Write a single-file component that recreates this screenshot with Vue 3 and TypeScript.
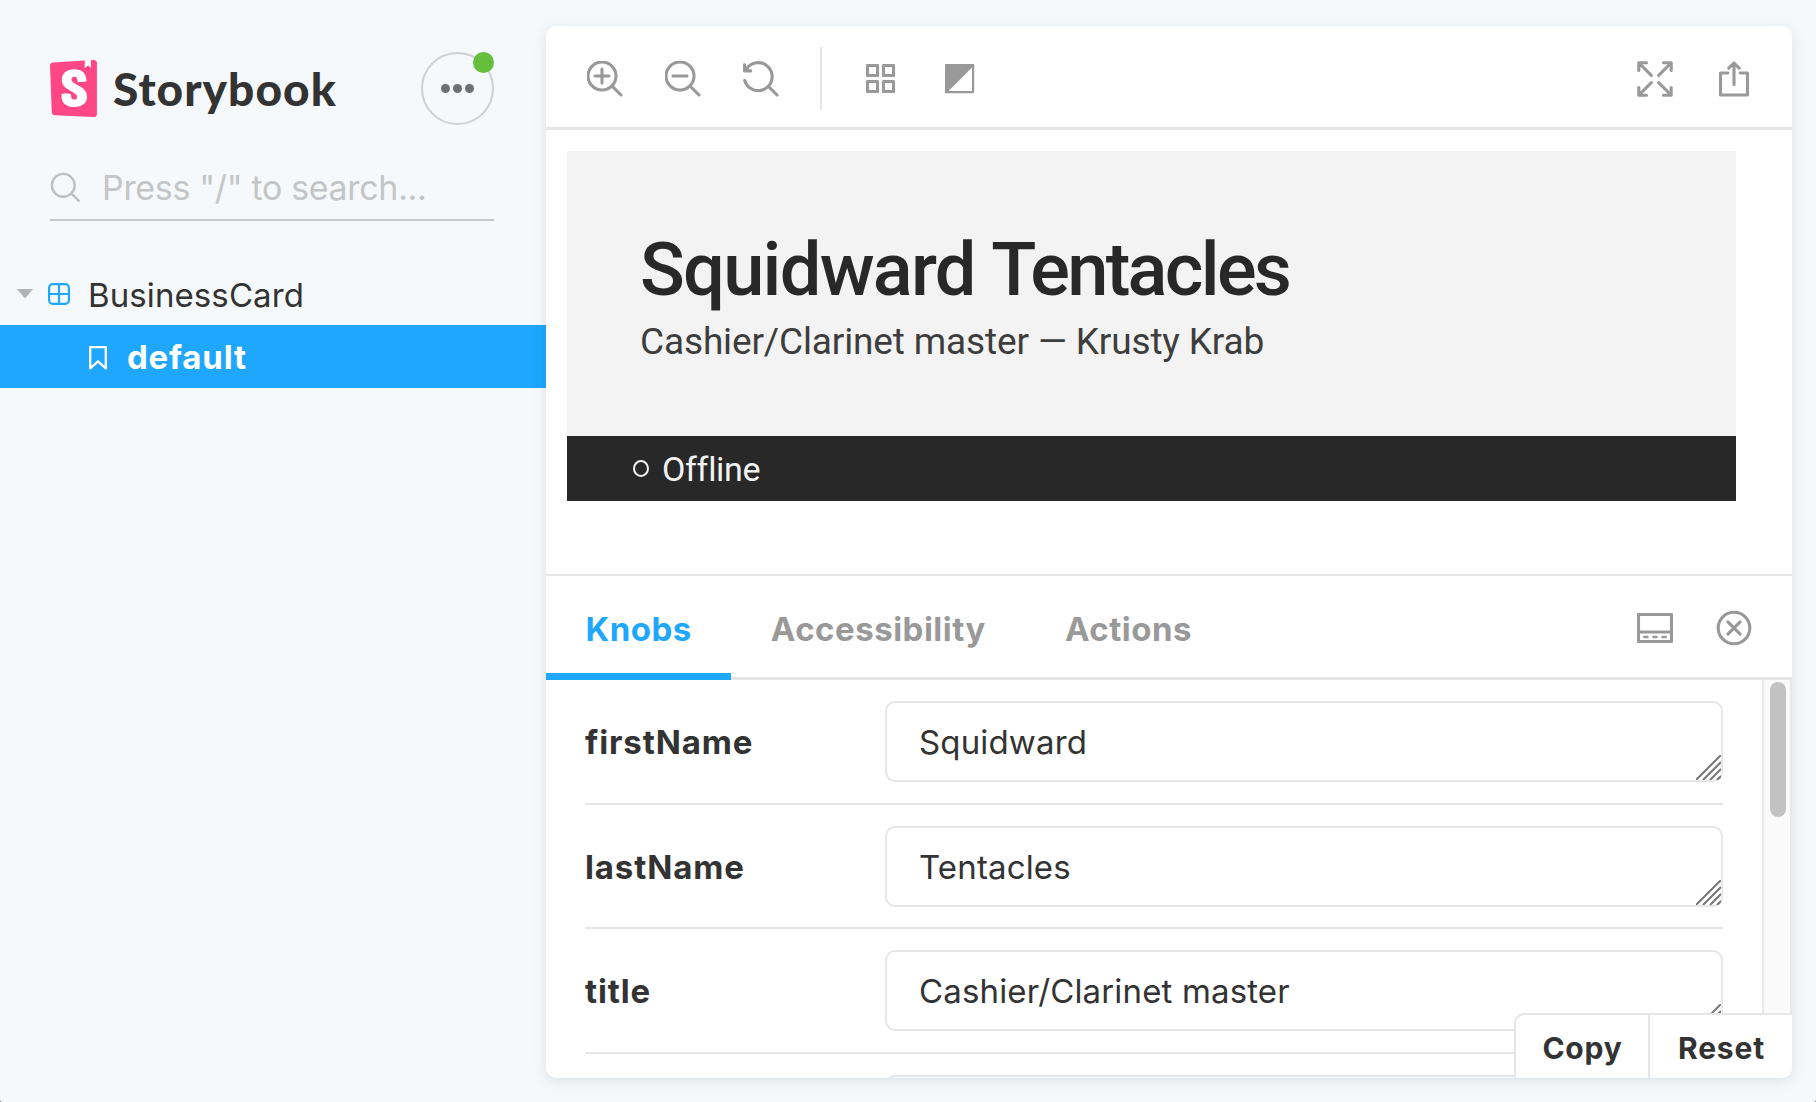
<script setup lang="ts">
import { ref } from 'vue'

interface Knob {
  name: string
  value: string
}

const tabs = ['Knobs', 'Accessibility', 'Actions']
const activeTab = ref('Knobs')

const knobs: Knob[] = [
  { name: 'firstName', value: 'Squidward' },
  { name: 'lastName', value: 'Tentacles' },
  { name: 'title', value: 'Cashier/Clarinet master' },
  { name: '', value: '' },
]
</script>

<template>
  <div class="app">
    <aside class="sidebar">
      <header class="brand">
        <svg class="logo" viewBox="0 0 256 319" preserveAspectRatio="none">
          <path fill="#ff4785" d="M9.87 293.32L.01 30.57C-.31 21.9 6.34 14.54 15.01 14L238.5.03c8.82-.55 16.42 6.15 16.97 14.97.02.33.03.66.03 1v286.93c0 8.84-7.16 16-16 16-.24 0-.48-.01-.72-.02L25.14 309.08c-8.28-.37-14.91-7.03-15.27-15.76z" />
          <path fill="#fff" d="M188.67 39.13l1.59-38.15L222.16 0l1.37 39.2c-.05 1.37-1.2 2.44-2.57 2.39-.54-.02-1.06-.21-1.48-.54l-12.3-9.69-14.57 11.05c-1.09.83-2.64.61-3.47-.47-.33-.43-.5-.97-.47-1.52zm-39.25 80.85c0 6.47 43.58 3.37 49.43-1.17 0-44.05-23.64-67.2-66.93-67.2-43.28 0-67.54 23.51-67.54 58.78 0 61.42 82.89 62.6 82.89 96.1 0 9.41-4.6 15-14.73 15-13.2 0-18.41-6.74-17.8-29.66 0-4.97-50.35-6.52-51.89 0-3.91 55.55 30.7 71.58 70.31 71.58 38.38 0 68.46-20.46 68.46-57.49 0-65.84-84.13-64.07-84.13-96.69 0-13.22 9.82-14.99 15.65-14.99 6.14 0 17.19 1.08 16.28 25.73z" />
        </svg>
        <span class="wordmark">Storybook</span>
        <button class="menu" aria-label="Menu">
          <i></i><i></i><i></i>
          <b class="badge"></b>
        </button>
      </header>

      <label class="search">
        <svg width="32" height="32" viewBox="0 0 32 32" fill="none" stroke="#bfc0c2" stroke-width="2.4" stroke-linecap="round">
          <circle cx="13.3" cy="13.3" r="11.4" />
          <path d="M21.6 21.6l7.2 7.2" />
        </svg>
        <span class="placeholder">Press "/" to search...</span>
      </label>

      <nav class="tree">
        <div class="node">
          <svg class="caret" width="16" height="10" viewBox="0 0 16 10"><path fill="#b2b3b5" d="M0 0h16L8 9.4z" /></svg>
          <svg class="component" width="22" height="22" viewBox="0 0 22 22" fill="none" stroke="#1ea7fd" stroke-width="2.2">
            <rect x="1.1" y="1.1" width="19.8" height="19.8" rx="3.6" />
            <path d="M11 1v20M1 11h20" />
          </svg>
          <span class="node-label">BusinessCard</span>
        </div>
        <div class="node selected">
          <svg class="bookmark" width="18" height="24" viewBox="0 0 18 24" fill="none" stroke="#fff" stroke-width="2.3" stroke-linejoin="round">
            <path d="M1.2 1.2h15.6v21.2l-7.8-7-7.8 7z" />
          </svg>
          <span class="story-label">default</span>
        </div>
      </nav>
    </aside>

    <main class="frame">
      <div class="toolbar">
        <svg class="tool" width="36" height="36" viewBox="0 0 36 36">
          <circle cx="15" cy="15" r="14" /><path d="M25.5 25.5L34 34M15 8v14M8 15h14" />
        </svg>
        <svg class="tool" width="36" height="36" viewBox="0 0 36 36">
          <circle cx="15" cy="15" r="14" /><path d="M25.5 25.5L34 34M8 15h14" />
        </svg>
        <svg class="tool" width="36" height="36" viewBox="0 0 36 36">
          <path d="M1.7 19.5A14 14 0 1 0 3.2 8.3M25.5 25.5L34 34M1.5 3.7v6.2h6.2M1.5 9.9L5 6.2" />
        </svg>
        <span class="separator"></span>
        <svg class="tool grid" width="30" height="30" viewBox="0 0 30 30">
          <rect x="1.5" y="1.5" width="10" height="10" /><rect x="17.5" y="1.5" width="10" height="10" />
          <rect x="1.5" y="17.5" width="10" height="10" /><rect x="17.5" y="17.5" width="10" height="10" />
        </svg>
        <svg class="tool contrast" width="30" height="30" viewBox="0 0 30 30">
          <rect class="thin" x="1.1" y="1.1" width="27" height="27" /><path class="solid" d="M1 1h27L1 28z" />
        </svg>
        <span class="grow"></span>
        <svg class="tool" width="36" height="36" viewBox="0 0 36 36">
          <path d="M1.8 9.5V1.8h7.7M2 2l12.3 12.3M26.5 1.8h7.7v7.7M34 2L21.7 14.3M1.8 26.5v7.7h7.7M2 34l12.3-12.3M26.5 34.2h7.7v-7.7M34 34L21.7 21.7" />
        </svg>
        <svg class="tool share" width="32" height="36" viewBox="0 0 32 36">
          <path d="M9.8 12H2.5v22h27V12h-7.3M16 23.5V2M10.8 7.2L16 2l5.2 5.2" />
        </svg>
      </div>

      <section class="preview">
        <article class="card">
          <div class="card-body">
            <h1>Squidward <span class="last">Tentacles</span></h1>
            <p>Cashier/Clarinet master — Krusty Krab</p>
          </div>
          <footer class="card-foot"><i class="ring"></i><span class="status">Offline</span></footer>
        </article>
      </section>

      <section class="addons">
        <div class="tabs">
          <button
            v-for="tab in tabs"
            :key="tab"
            class="tab"
            :class="{ active: tab === activeTab }"
            @click="activeTab = tab"
          >{{ tab }}</button>
          <span class="grow"></span>
          <svg class="tool panel-icon" width="36" height="30" viewBox="0 0 36 30">
            <rect x="1.5" y="1.5" width="33" height="27" /><path d="M2 19h32" />
            <path class="dash" d="M7.3 24h3.2M16.4 24h3.2M25.5 24h3.2" />
          </svg>
          <svg class="tool close" width="36" height="36" viewBox="0 0 36 36">
            <circle cx="18" cy="18" r="15.8" /><path d="M11.9 11.9l12.2 12.2M24.1 11.9L11.9 24.1" />
          </svg>
        </div>
        <div class="panel-body">
          <div class="knobs">
            <div v-for="(knob, i) in knobs" :key="i" class="knob">
              <span class="knob-name">{{ knob.name }}</span>
              <div class="field">
                <span class="value">{{ knob.value }}</span>
                <svg class="resize" width="25" height="25" viewBox="0 0 25 25" fill="none" stroke="#777" stroke-width="2">
                  <path d="M0 25L25 0M7 25L25 7M14 25L25 14M21 25L25 21" />
                </svg>
              </div>
            </div>
          </div>
          <div class="scrollbar"><div class="thumb"></div></div>
        </div>
        <div class="footer-actions">
          <button class="copy">Copy</button>
          <button class="reset">Reset</button>
        </div>
      </section>
    </main>
  </div>
</template>

<style>
html {
  background: #8d9092;
}
body {
  overflow: hidden;
}
</style>

<style scoped>
* {
  box-sizing: border-box;
}
.app {
  display: flex;
  width: 1816px;
  height: 1102px;
  overflow: hidden;
  background: #f6f9fc;
  border-radius: 0 0 3px 3px;
  color: #333;
  font-family: Inter, "Liberation Sans", sans-serif;
  font-size: 33px;
}
button {
  margin: 0;
  padding: 0;
  border: 0;
  background: none;
  color: inherit;
  font: inherit;
}
svg {
  display: block;
  flex: none;
}
.sidebar {
  flex: none;
  width: 546px;
}
.brand {
  display: flex;
  align-items: center;
  height: 73px;
  margin: 52px 52px 0 50px;
}
.logo {
  width: 47px;
  height: 57px;
}
.wordmark {
  margin-left: 16px;
  font: 900 46px/73px Lato, sans-serif;
  letter-spacing: 1.05px;
  white-space: nowrap;
}
.menu {
  position: relative;
  display: flex;
  align-items: center;
  justify-content: center;
  gap: 3px;
  width: 73px;
  height: 73px;
  margin-left: auto;
  border: 2px solid #ced0d3;
  border-radius: 50%;
}
.menu i {
  width: 9px;
  height: 9px;
  border-radius: 50%;
  background: #6d6f71;
}
.badge {
  position: absolute;
  top: -2px;
  right: -2px;
  width: 21px;
  height: 21px;
  border-radius: 50%;
  background: #66bf3c;
}
.search {
  display: flex;
  align-items: center;
  width: 444px;
  height: 65px;
  margin: 31px 0 0 50px;
  border-bottom: 2px solid #c5c7ca;
}
.placeholder {
  margin: 0 0 0 20px;
  color: #c4c5c7;
  font-size: 34px;
  letter-spacing: -0.33px;
  white-space: nowrap;
}
.tree {
  margin-top: 41px;
}
.node {
  display: flex;
  align-items: center;
  height: 63px;
  padding-left: 17px;
  white-space: nowrap;
}
.component {
  margin-left: 15px;
}
.node-label {
  margin: 3px 0 0 18px;
  letter-spacing: 0.1px;
}
.selected {
  padding-left: 89px;
  background: #1ea7fd;
  color: #fff;
  font-weight: 700;
}
.story-label {
  margin-left: 20px;
  letter-spacing: 0.8px;
}
.bookmark {
  margin-top: 3px;
}
.frame {
  display: flex;
  flex-direction: column;
  position: relative;
  width: 1246px;
  height: 1052px;
  margin-top: 26px;
  border-radius: 10px;
  background: #fff;
  box-shadow: 0 3px 14px rgba(0, 0, 0, 0.1);
}
.toolbar {
  display: flex;
  align-items: center;
  flex: none;
  gap: 42px;
  height: 104px;
  padding: 4px 42.5px 0 41px;
  border-bottom: 3px solid #e6e6e6;
}
.tool {
  fill: none;
  stroke: #999;
  stroke-width: 3.1;
  stroke-linecap: round;
  stroke-linejoin: round;
}
.thin {
  stroke-width: 2.2;
}
.solid {
  fill: #999;
  stroke-width: 2;
}
.dash {
  stroke-width: 2.4;
}
.separator {
  width: 2px;
  height: 63px;
  margin-left: -1px;
  background: #e6e6e6;
}
.grid {
  margin-left: 2px;
}
.contrast {
  margin-left: 7px;
}
.grow {
  flex: 1;
}
.share {
  margin-left: 3px;
}
.preview {
  flex: none;
  height: 444px;
  padding: 21px 56px 0 21px;
}
.card-body {
  height: 285px;
  padding: 74px 73px 0;
  background: #f3f3f3;
}
.card h1 {
  margin: 0;
  color: #282828;
  font: 500 74px/90px Roboto, sans-serif;
  letter-spacing: -1.75px;
  white-space: nowrap;
}
.last {
  letter-spacing: -2.7px;
}
.card p {
  margin: 4px 0 0;
  color: #3d3d3d;
  font: 400 37px/46px Roboto, sans-serif;
  letter-spacing: -0.14px;
  white-space: nowrap;
}
.card-foot {
  display: flex;
  align-items: center;
  height: 65px;
  padding-left: 66px;
  background: #282828;
  color: #f3f3f3;
  font: 400 34px/65px Roboto, sans-serif;
  font-variant-ligatures: none;
}
.status {
  padding-top: 2px;
  letter-spacing: -0.3px;
}
.ring {
  width: 16px;
  height: 17px;
  margin-right: 13px;
  border: 2px solid #f3f3f3;
  border-radius: 50%;
}
.addons {
  position: relative;
  display: flex;
  flex-direction: column;
  flex: none;
  height: 504px;
  overflow: hidden;
  border-top: 2px solid #e6e6e6;
  border-radius: 0 0 10px 10px;
}
.tabs {
  display: flex;
  align-items: center;
  flex: none;
  height: 104px;
  padding-right: 40.5px;
  box-shadow: inset 0 -3px #e6e6e6;
}
.tab {
  height: 104px;
  padding: 2px 39.5px 0 39.5px;
  border: solid transparent;
  border-width: 7px 0;
  color: #999;
  font-weight: 700;
  letter-spacing: 0.5px;
  white-space: nowrap;
}
.tab.active {
  border-bottom-color: #1ea7fd;
  color: #1ea7fd;
}
.close {
  margin-left: 43px;
}
.panel-body {
  display: flex;
  flex: 1;
  min-height: 0;
}
.knobs {
  flex: 1;
  padding: 0 39px;
}
.knob {
  display: flex;
  align-items: flex-start;
  height: 124.6px;
  padding-top: 21px;
  border-bottom: 2px solid #e6e6e6;
}
.knob-name {
  flex: none;
  width: 300px;
  font-weight: 700;
  line-height: 83px;
  letter-spacing: 0.85px;
}
.field {
  position: relative;
  flex: 1;
  height: 81px;
  padding-left: 32px;
  border: 2px solid #e6e6e6;
  border-radius: 10px;
  line-height: 79px;
  letter-spacing: 0.15px;
}
.resize {
  position: absolute;
  right: 0;
  bottom: 0;
}
.scrollbar {
  flex: none;
  width: 30px;
  padding: 2px 0 0 6px;
  border: 0 solid #e8e8e8;
  border-width: 0 2px;
  background: #fafafa;
}
.thumb {
  width: 16px;
  height: 135px;
  border-radius: 8px;
  background: #c2c2c2;
}
.footer-actions {
  position: absolute;
  right: 0;
  bottom: 0;
  display: flex;
  height: 65px;
  border: solid #e6e6e6;
  border-width: 2px 0 0 2px;
  border-radius: 10px 0 0 0;
  background: #fff;
  font-size: 30px;
  font-weight: 700;
}
.footer-actions button {
  padding: 2px 0 0 1px;
  letter-spacing: 0.8px;
}
.footer-actions .copy {
  width: 132px;
}
.footer-actions .reset {
  width: 144px;
  border-left: 2px solid #e6e6e6;
}
</style>
